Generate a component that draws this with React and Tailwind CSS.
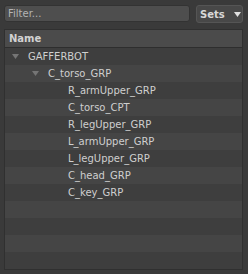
import React from 'react'

const items = [
  { label: 'GAFFERBOT', depth: 0, arrow: true },
  { label: 'C_torso_GRP', depth: 1, arrow: true },
  { label: 'R_armUpper_GRP', depth: 2 },
  { label: 'C_torso_CPT', depth: 2 },
  { label: 'R_legUpper_GRP', depth: 2 },
  { label: 'L_armUpper_GRP', depth: 2 },
  { label: 'L_legUpper_GRP', depth: 2 },
  { label: 'C_head_GRP', depth: 2 },
  { label: 'C_key_GRP', depth: 2 },
  { label: '', depth: 0 },
  { label: '', depth: 0 },
  { label: '', depth: 0 },
  { label: '', depth: 0 },
]

// arrow sits at 12px + 20px per level, label 16px after it
const indents = ['pl-[7px]', 'pl-[27px]', 'pl-[47px]']

const Arrow = () => (
  <svg width="7" height="5" viewBox="0 0 7 5" className="mr-[9px] shrink-0">
    <path d="M0 0 L7 0 L3.5 5 Z" fill="#757575" />
  </svg>
)

const Row = ({ item, idx }) => (
  <div
    className={
      'flex h-[17px] items-center text-[10px] text-[#cfcfcf] ' +
      (idx % 2 === 1 ? 'bg-[#454545] ' : 'bg-[#3e3e3e] ') +
      indents[item.depth]
    }
  >
    {item.arrow ? <Arrow /> : item.label && <span className="w-[16px] shrink-0" />}
    <span>{item.label}</span>
  </div>
)

export default function App() {
  return (
    <div
      className="flex h-[274px] w-[248px] flex-col bg-[#3a3a3a] pl-[4px] pr-[5px] pt-[5px]"
      style={{ fontFamily: '"DejaVu Sans", sans-serif' }}
    >
      {/* filter + sets */}
      <div className="flex gap-[6px]">
        <div className="flex h-[17px] flex-1 items-center rounded-[3px] border border-[#333333] bg-[#4e4e4e] pl-[3px] text-[10px] text-[#b4b4b4]">
          Filter...
        </div>
        <button className="flex h-[18px] w-[47px] items-center rounded-[3px] border border-[#555555] bg-[#484848] pl-[3px] text-[10px] font-bold text-[#d8d8d8]">
          Sets
          <svg width="7" height="5" viewBox="0 0 7 5" className="ml-[9px]">
            <path d="M0 0 L7 0 L3.5 5 Z" fill="#e0e0e0" />
          </svg>
        </button>
      </div>

      {/* tree */}
      <div className="mt-[6px] flex flex-col border border-[#303030]">
        <div className="flex h-[18px] items-center border-b border-[#2e2e2e] bg-[#4b4b4b] pl-[4px] text-[10px] font-bold text-[#d2d2d2]">
          Name
        </div>
        {items.map((it, i) => (
          <Row key={i} item={it} idx={i} />
        ))}
      </div>
    </div>
  )
}
